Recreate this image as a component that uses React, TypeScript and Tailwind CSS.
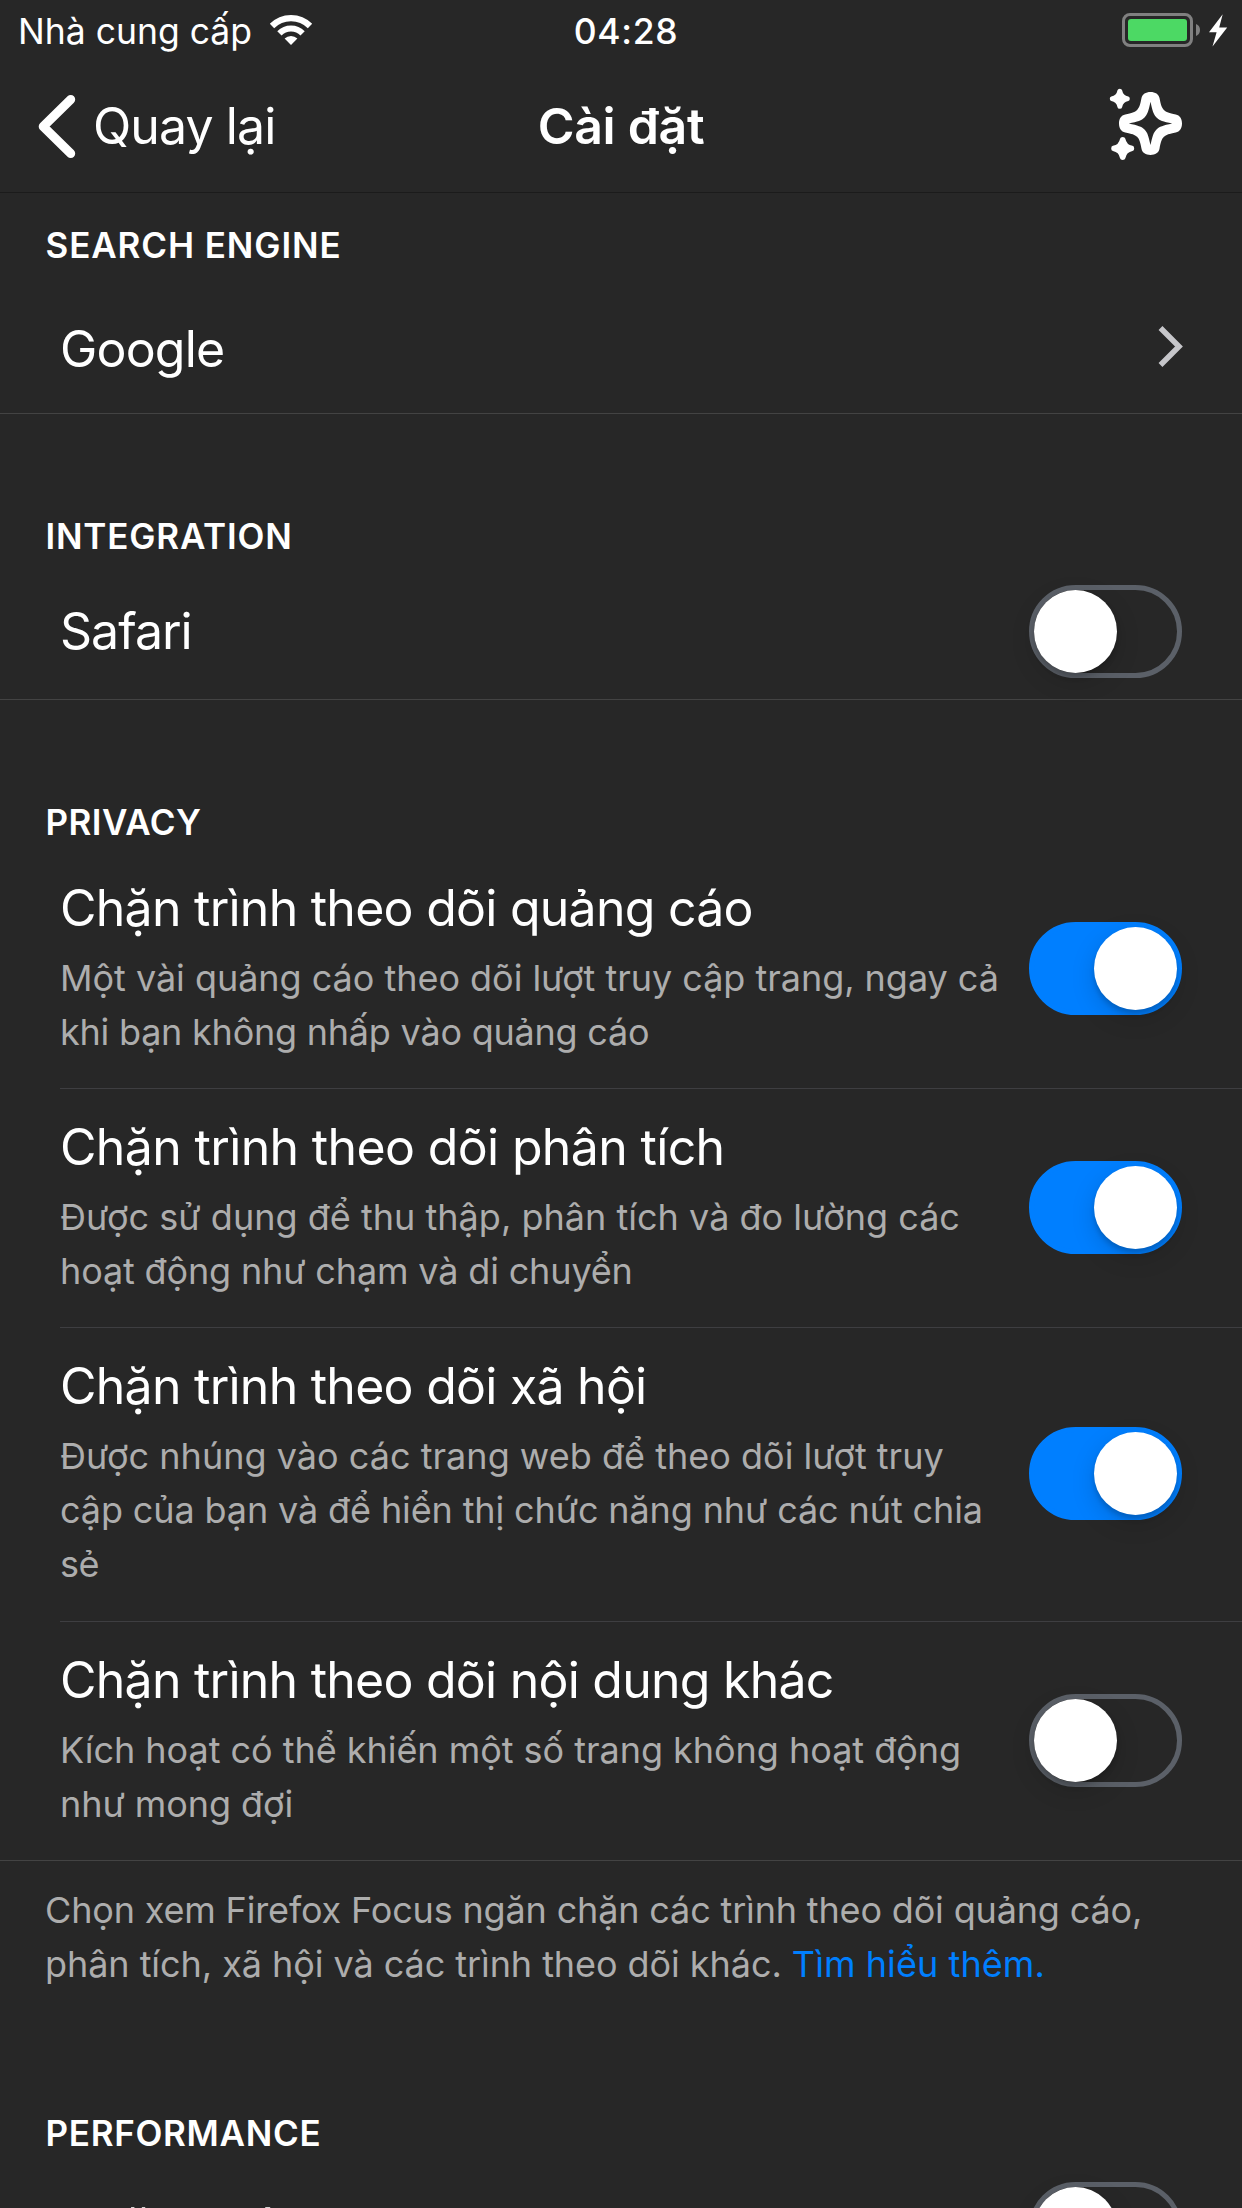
import React from 'react';

function Toggle({ on = false }: { on?: boolean }) {
  return (
    <button
      role="switch"
      aria-checked={on}
      className={
        on
          ? 'flex h-[93px] w-[153px] shrink-0 justify-end rounded-full border-[5px] border-[#007fff] bg-[#007fff]'
          : 'flex h-[93px] w-[153px] shrink-0 justify-start rounded-full border-[5px] border-[#5b6068]'
      }
    >
      <span className="size-[83px] rounded-full bg-white shadow-[0_8px_24px_rgba(0,0,0,0.15),0_4px_5px_rgba(0,0,0,0.16)]" />
    </button>
  );
}

function WifiIcon() {
  return (
    <svg className="h-[31px] w-[44px]" viewBox="-22 -31 44 31" fill="none" stroke="white">
      <path d="M-19 -19A26.8 26.8 0 0 1 19 -19" strokeWidth="6.2" />
      <path d="M-11.6 -11.6A16.4 16.4 0 0 1 11.6 -11.6" strokeWidth="6" />
      <path d="M0 0L-6.4 -6.4A9.1 9.1 0 0 1 6.4 -6.4Z" fill="white" stroke="none" />
    </svg>
  );
}

function BatteryIcon() {
  return (
    <svg className="h-[34px] w-[106px]" viewBox="0 0 106 34">
      <rect x="1.5" y="1.5" width="68" height="31" rx="6.5" fill="none" stroke="#808080" strokeWidth="3" />
      <rect x="6" y="6" width="59" height="22" rx="3" fill="#4cd964" />
      <path d="M74 11c2.600 1 4 3.200 4 6s-1.400 5-4 6z" fill="#808080" />
      <path d="M100.700 1.300 87 19.200h7.600L90.500 33.600 105.200 14.400h-8z" fill="white" />
    </svg>
  );
}

const SPARK =
  'M-2.300 -8.500Q-2 -10 0 -10Q2 -10 2.300 -8.500Q3.300 -3.300 8.500 -2.300Q10 -2 10 0Q10 2 8.500 2.300Q3.300 3.300 2.300 8.500Q2 10 0 10Q-2 10 -2.300 8.500Q-3.300 3.300 -8.500 2.300Q-10 2 -10 0Q-10 -2 -8.500 -2.300Q-3.300 -3.300 -2.300 -8.500Z';

function SparkleIcon() {
  return (
    <svg className="h-[76px] w-[76px]" viewBox="0 0 76 76" fill="white">
      <path
        transform="translate(42.500 37.400)"
        fillRule="evenodd"
        d="M-9 -25.300C-8.200 -29.300 -4.800 -31.500 0 -31.500C4.800 -31.500 8.200 -29.300 9 -25.300C10.300 -18.500 11.200 -15.700 13.400 -13.400C15.700 -11.200 18.500 -10.300 25.300 -9C29.300 -8.200 31.500 -4.800 31.500 0C31.500 4.800 29.300 8.200 25.300 9C18.500 10.300 15.700 11.200 13.400 13.400C11.200 15.700 10.300 18.500 9 25.300C8.200 29.300 4.800 31.500 0 31.500C-4.800 31.500 -8.200 29.300 -9 25.300C-10.300 18.500 -11.200 15.700 -13.400 13.400C-15.700 11.200 -18.500 10.300 -25.300 9C-29.300 8.200 -31.500 4.800 -31.500 0C-31.500 -4.800 -29.300 -8.200 -25.300 -9C-18.500 -10.300 -15.700 -11.200 -13.400 -13.400C-11.200 -15.700 -10.300 -18.500 -9 -25.300Z M0 -21.700C2 -12.500 3 -9 6 -6C9 -3 12.500 -2 21.700 0C12.500 2 9 3 6 6C3 9 2 12.500 0 21.700C-2 12.500 -3 9 -6 6C-9 3 -12.500 2 -21.700 0C-12.500 -2 -9 -3 -6 -6C-3 -9 -2 -12.500 0 -21.700Z"
      />
      <path transform="translate(11.800 12.800)" d={SPARK} />
      <path transform="translate(14.700 62.400) scale(1.150)" d={SPARK} />
    </svg>
  );
}

function SectionHeader({
  children,
  className = 'pt-[100px] tracking-[0.8px]',
}: {
  children: React.ReactNode;
  className?: string;
}) {
  return (
    <div className={className}>
      <h2 className="pb-1.5 pl-[45.5px] text-[35px] leading-[44px] font-semibold">{children}</h2>
    </div>
  );
}

type Line = [text: string, tracking: string];

const TRACKERS: { title: Line; lines: Line[]; on: boolean; box: string }[] = [
  {
    title: ['Chặn trình theo dõi quảng cáo', 'tracking-[-0.75px]'],
    lines: [
      ['Một vài quảng cáo theo dõi lượt truy cập trang, ngay cả', 'tracking-[-0.03px]'],
      ['khi bạn không nhấp vào quảng cáo', 'tracking-[-0.23px]'],
    ],
    on: true,
    box: 'ml-[60px] flex h-[239px] border-b border-[#3e3e41] pr-[60px]',
  },
  {
    title: ['Chặn trình theo dõi phân tích', 'tracking-[-0.65px]'],
    lines: [
      ['Được sử dụng để thu thập, phân tích và đo lường các', 'tracking-[0.02px]'],
      ['hoạt động như chạm và di chuyển', 'tracking-[-0.15px]'],
    ],
    on: true,
    box: 'ml-[60px] flex h-[239px] border-b border-[#3e3e41] pr-[60px]',
  },
  {
    title: ['Chặn trình theo dõi xã hội', 'tracking-[-0.75px]'],
    lines: [
      ['Được nhúng vào các trang web để theo dõi lượt truy', 'tracking-[0.02px]'],
      ['cập của bạn và để hiển thị chức năng như các nút chia', 'tracking-[-0.12px]'],
      ['sẻ', 'tracking-[-0.5px]'],
    ],
    on: true,
    box: 'ml-[60px] flex h-[294px] border-b border-[#3e3e41] pr-[60px]',
  },
  {
    title: ['Chặn trình theo dõi nội dung khác', 'tracking-[-0.76px]'],
    lines: [
      ['Kích hoạt có thể khiến một số trang không hoạt động', 'tracking-[-0.03px]'],
      ['như mong đợi', 'tracking-[-0.06px]'],
    ],
    on: false,
    box: 'flex h-[239px] border-b border-[#434343] pr-[60px] pl-[60px]',
  },
];

export default function App() {
  return (
    <div className="h-[2208px] w-[1242px] overflow-hidden bg-[#272727] font-['Inter',sans-serif] text-white">
      <div className="grid h-[60px] grid-cols-[1fr_auto_1fr] items-start pt-[11px] text-[35.5px] leading-[42px]">
        <div className="flex pl-[18px]">
          <span className="whitespace-nowrap">Nhà cung cấp</span>
          <div className="ml-[17px] pt-[3px]">
            <WifiIcon />
          </div>
        </div>
        <span className="pl-2.5 font-medium tracking-[0.7px]">04:28</span>
        <div className="flex justify-end pt-0.5 pr-[14px]">
          <BatteryIcon />
        </div>
      </div>

      <header className="grid h-[133px] grid-cols-[1fr_auto_1fr] items-start border-b border-[#1b1b1b] pt-[36px] text-[50px] leading-[60px]">
        <button className="flex pl-[36px]">
          <svg className="-mt-1.5 h-[72px] w-[44px]" viewBox="0 0 44 72" fill="none" stroke="white" strokeWidth="9" strokeLinecap="round" strokeLinejoin="round">
            <path d="M34.700 9.500 7.200 36.500 34.700 63.500" />
          </svg>
          <span className="ml-[13px] tracking-[-0.9px]">Quay lại</span>
        </button>
        <h1 className="font-semibold tracking-[-0.3px]">Cài đặt</h1>
        <div className="-mt-2.5 flex justify-end pr-[58px]">
          <SparkleIcon />
        </div>
      </header>

      <SectionHeader className="-mb-px pt-[30px] tracking-[0.9px]">SEARCH ENGINE</SectionHeader>
      <div className="flex h-[142px] items-start justify-between border-b border-[#434343] pt-[47px] pr-[59px] pl-[60px]">
        <span className="text-[50px] leading-[60px] tracking-[-0.8px]">Google</span>
        <svg className="mt-[5px] h-[46px] w-[26px]" viewBox="0 0 26 46" fill="none" stroke="#c6c6ca" strokeWidth="5.5">
          <path d="M3.500 4 22 22.500 3.500 41" />
        </svg>
      </div>

      <SectionHeader>INTEGRATION</SectionHeader>
      <div className="flex h-[136px] items-center justify-between border-b border-[#434343] pr-[60px] pl-[60px]">
        <span className="pb-0.5 text-[50px] leading-[60px] tracking-[-1px]">Safari</span>
        <Toggle />
      </div>

      <SectionHeader className="pt-[100px] tracking-[0.45px]">PRIVACY</SectionHeader>
      {TRACKERS.map(({ title, lines, on, box }) => (
        <div key={title[0]} className={box}>
          <div className="flex-1 pt-7 whitespace-nowrap">
            <div className="text-[50px] leading-[60px]">
              <span className={title[1]}>{title[0]}</span>
            </div>
            <div className="mt-[13px] text-[36px] leading-[54px] text-[#adadad]">
              {lines.map(([text, tracking]) => (
                <div key={text} className={tracking}>
                  {text}
                </div>
              ))}
            </div>
          </div>
          <div className="flex items-center pb-0.5">
            <Toggle on={on} />
          </div>
        </div>
      ))}

      <div className="pt-[22px] pl-[45px] text-[36px] leading-[54px] whitespace-nowrap text-[#adadad]">
        <p className="tracking-[-0.16px]">Chọn xem Firefox Focus ngăn chặn các trình theo dõi quảng cáo,</p>
        <p className="tracking-[-0.06px]">
          phân tích, xã hội và các trình theo dõi khác. <a className="tracking-[0.08px] text-[#007fff]">Tìm hiểu thêm.</a>
        </p>
      </div>

      <SectionHeader className="pt-[120px] tracking-[0.7px]">PERFORMANCE</SectionHeader>
      <div className="flex h-[136px] items-center justify-between border-b border-[#434343] pr-[60px] pl-[60px]">
        <span className="pb-1 text-[50px] leading-[60px] tracking-[-0.75px]">Chặn phông chữ web</span>
        <Toggle />
      </div>
    </div>
  );
}
